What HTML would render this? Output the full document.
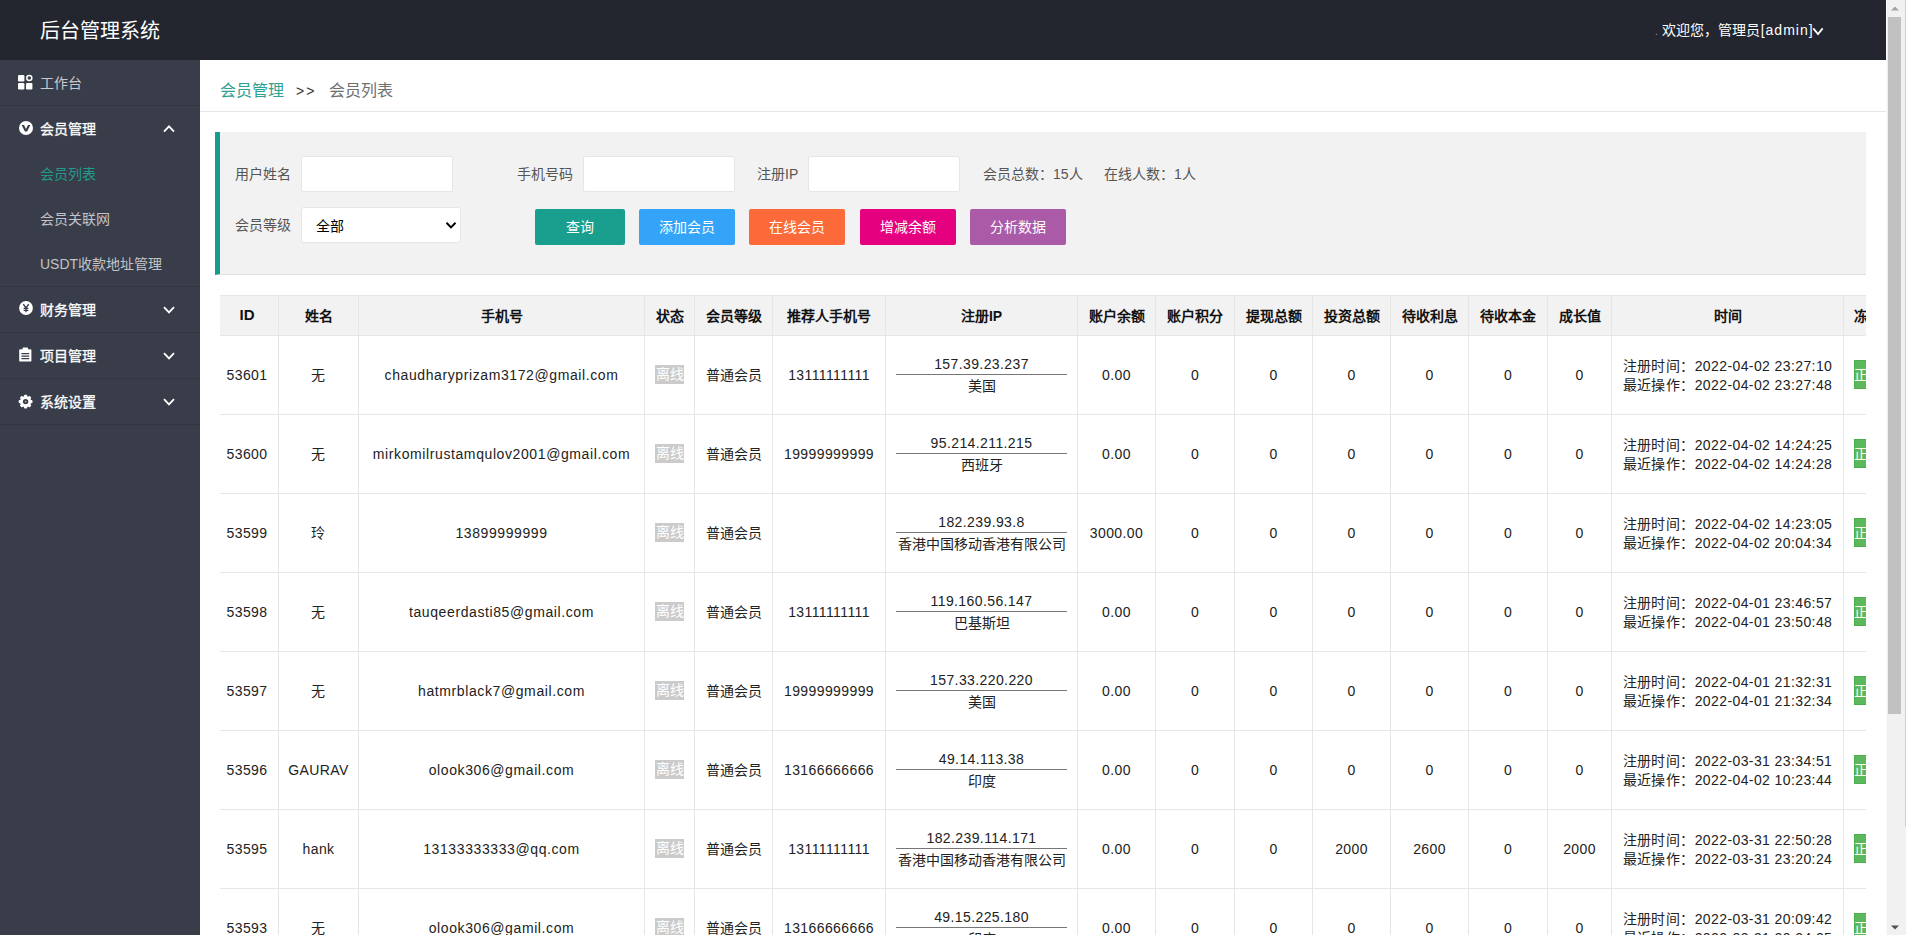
<!DOCTYPE html>
<html lang="zh-CN">
<head>
<meta charset="utf-8">
<title>后台管理系统</title>
<style>
*{box-sizing:border-box;margin:0;padding:0}
html,body{width:1906px;height:935px;overflow:hidden;background:#fff}
body{font-family:"Liberation Sans",sans-serif;font-size:14px;color:#222;position:relative}
.abs{position:absolute}
/* header */
#hd{left:0;top:0;width:1886px;height:60px;background:#23262e}
#logo{left:40px;top:1px;height:60px;line-height:60px;font-size:20px;color:#fff;white-space:nowrap}
#user{left:1655px;top:0;height:60px;line-height:60px;font-size:14px;color:#fff;white-space:nowrap}
/* sidebar */
#side{left:0;top:60px;width:200px;height:875px;background:#393d49}
.mi{position:absolute;left:0;width:200px;height:46px;border-bottom:1px solid #32353f;color:#fff;font-size:14px;line-height:45px;white-space:nowrap}
.mi .t{position:absolute;left:40px;top:1px;-webkit-text-stroke:.3px currentColor}
.mi svg.ic{position:absolute;left:17px;top:14px}
.mi svg.ch{position:absolute;left:162px;top:18px}
.sub{position:absolute;left:40px;height:45px;line-height:47px;font-size:14px;color:#c2c3c8;white-space:nowrap}
/* main */
#bc{left:200px;top:60px;width:1686px;height:52px;border-bottom:1px solid #e6e6e6;background:#fff}
#bc span{position:absolute;top:1px;height:60px;line-height:60px;font-size:16px;white-space:nowrap}
#panel{left:215px;top:132px;width:1651px;height:143px;background:#f2f2f2;border-left:5px solid #169c8c;border-bottom:1px solid #e2e2e2}
.lb{position:absolute;font-size:14px;color:#555;height:36px;line-height:36px;white-space:nowrap}
.inp{position:absolute;height:36px;background:#fff;border:1px solid #e6e6e6;border-radius:2px}
.btn{position:absolute;top:209px;height:36px;line-height:36px;border-radius:2px;color:#fff;font-size:14px;text-align:center;white-space:nowrap}
/* table */
#tw{left:220px;top:295px;width:1646px;height:640px;overflow:hidden}
#tw table{table-layout:fixed;width:1714px;border-collapse:separate;border-spacing:0}
#tw th{height:41px;background:#f2f2f2;border-top:1px solid #e6e6e6;border-bottom:1px solid #e6e6e6;border-right:1px solid #e6e6e6;font-weight:bold;font-size:14px;color:#111;text-align:center;white-space:nowrap;overflow:hidden;padding-bottom:2px}
#tw th:first-child,#tw td:first-child{padding-right:4px}
#tw th:first-child{font-size:15px}
#tw td:nth-child(3){letter-spacing:.6px}
#tw td{height:79px;border-bottom:1px solid #e6e6e6;border-right:1px solid #e6e6e6;font-size:14px;color:#222;text-align:center;vertical-align:middle;white-space:nowrap;overflow:hidden;line-height:19px;letter-spacing:.4px}
#tw td.last,#tw th:last-child{text-align:left;padding-left:10px}
.off{display:inline-block;width:29px;height:19px;line-height:19px;background:#cbcbcb;color:#fff;vertical-align:middle;overflow:hidden;position:relative;top:-1px;letter-spacing:0}
.ok{display:inline-block;height:29px;line-height:29px;text-indent:-1px;padding:0;background:#5cb85c;border:1px solid #4cae4c;color:#fdfde8;font-size:14px;vertical-align:middle;position:relative;top:-1px;letter-spacing:0}
.ip{line-height:20px}
.hr{width:171px;height:1px;background:#777;margin:0 auto}
.loc{line-height:22px;letter-spacing:0}
#tw td:nth-child(5){letter-spacing:0}
.tm{line-height:19px;display:inline-block;text-align:left;position:relative;top:1px}
/* scrollbar */
#sb{left:1886px;top:0;width:20px;height:935px;background:#f1f1f1;border-left:1px solid #fafafa}
</style>
</head>
<body>
<!-- HEADER -->
<div id="hd" class="abs">
  <div id="logo" class="abs">后台管理系统</div>
  <div id="user" class="abs"><span style="font-size:10px;color:#9a9ca3">.</span> 欢迎您，管理员<span style="letter-spacing:1px;margin-left:1px">[admin]</span><svg width="12" height="9" viewBox="0 0 12 9" style="margin-left:-1.4px;vertical-align:-1px"><path d="M1.3 1.4 L6 7 L10.7 1.4" fill="none" stroke="#fff" stroke-width="1.8"/></svg></div>
</div>

<!-- SIDEBAR -->
<div id="side" class="abs">
  <div class="mi" style="top:0;color:#c9cacf">
    <svg class="ic" width="16" height="16" viewBox="0 0 16 16"><rect x="1" y="1" width="6.4" height="6.4" rx="1.2" fill="#fff"/><rect x="1" y="9" width="6.4" height="6.4" rx="1.2" fill="#fff"/><rect x="9" y="9" width="6.4" height="6.4" rx="1.2" fill="#fff"/><circle cx="12.3" cy="4.1" r="2.5" fill="none" stroke="#fff" stroke-width="1.5"/></svg>
    <span class="t" style="-webkit-text-stroke:0">工作台</span>
  </div>
  <div class="mi" style="top:46px;border-bottom:none">
    <svg class="ic" width="16" height="16" viewBox="0 0 16 16" style="top:14px;left:18px"><circle cx="8" cy="8" r="7" fill="#fff"/><path d="M3.6 5 H6 L8 8.9 L10 5 H12.4 L9.1 11.4 H6.9 Z" fill="#393d49"/></svg>
    <span class="t">会员管理</span>
    <svg class="ch" width="14" height="10" viewBox="0 0 14 10"><path d="M2 7.6 L7 2.4 L12 7.6" fill="none" stroke="#fff" stroke-width="1.8"/></svg>
  </div>
  <div class="sub" style="top:91px;color:#1f9c89">会员列表</div>
  <div class="sub" style="top:136px">会员关联网</div>
  <div class="sub" style="top:181px">USDT收款地址管理</div>
  <div class="abs" style="left:0;top:226px;width:200px;height:1px;background:#32353f"></div>
  <div class="mi" style="top:227px">
    <svg class="ic" width="16" height="16" viewBox="0 0 16 16" style="left:18px;top:13px"><circle cx="8" cy="8" r="6.9" fill="#fff"/><path d="M5.3 4.2 L8 8 L10.7 4.2 M8 8 V12.2 M5.6 8.3 H10.4 M5.6 10.3 H10.4" fill="none" stroke="#393d49" stroke-width="1.35"/></svg>
    <span class="t">财务管理</span>
    <svg class="ch" width="14" height="10" viewBox="0 0 14 10"><path d="M2 2.2 L7 7.4 L12 2.2" fill="none" stroke="#fff" stroke-width="1.8"/></svg>
  </div>
  <div class="mi" style="top:273px">
    <svg class="ic" width="16" height="16" viewBox="0 0 16 16" style="left:18px;top:14px"><rect x="1.2" y="2.2" width="12.2" height="12.4" rx="1.2" fill="#fff"/><rect x="4.6" y="0.6" width="5.4" height="3.2" rx="0.8" fill="#fff"/><path d="M3.4 6.6 H11.2 M3.4 9.1 H11.2 M3.4 11.6 H11.2" stroke="#393d49" stroke-width="1.15"/></svg>
    <span class="t">项目管理</span>
    <svg class="ch" width="14" height="10" viewBox="0 0 14 10"><path d="M2 2.2 L7 7.4 L12 2.2" fill="none" stroke="#fff" stroke-width="1.8"/></svg>
  </div>
  <div class="mi" style="top:319px">
    <svg class="ic" width="16" height="16" viewBox="0 0 16 16" style="left:18px;top:15px"><g fill="#fff"><circle cx="7.6" cy="7.6" r="5.6"/><rect x="6" y="0.7" width="3.2" height="13.8" rx="1"/><rect x="6" y="0.7" width="3.2" height="13.8" rx="1" transform="rotate(45 7.6 7.6)"/><rect x="6" y="0.7" width="3.2" height="13.8" rx="1" transform="rotate(90 7.6 7.6)"/><rect x="6" y="0.7" width="3.2" height="13.8" rx="1" transform="rotate(135 7.6 7.6)"/></g><circle cx="7.6" cy="7.6" r="2.7" fill="#393d49"/><circle cx="7.6" cy="7.6" r="0.9" fill="#fff" opacity=".55"/></svg>
    <span class="t">系统设置</span>
    <svg class="ch" width="14" height="10" viewBox="0 0 14 10"><path d="M2 2.2 L7 7.4 L12 2.2" fill="none" stroke="#fff" stroke-width="1.8"/></svg>
  </div>
</div>

<!-- BREADCRUMB -->
<div id="bc" class="abs">
  <span style="left:20px;color:#2fa193">会员管理</span>
  <span style="left:96px;color:#333;font-size:14px;letter-spacing:2px">&gt;&gt;</span>
  <span style="left:129px;color:#6f6f6f">会员列表</span>
</div>

<!-- FILTER PANEL -->
<div id="panel" class="abs"></div>
<div class="lb" style="left:235px;top:156px">用户姓名</div>
<div class="inp" style="left:301px;top:156px;width:152px"></div>
<div class="lb" style="left:517px;top:156px">手机号码</div>
<div class="inp" style="left:583px;top:156px;width:152px"></div>
<div class="lb" style="left:757px;top:156px">注册IP</div>
<div class="inp" style="left:808px;top:156px;width:152px"></div>
<div class="lb" style="left:983px;top:156px">会员总数：15人</div>
<div class="lb" style="left:1104px;top:156px">在线人数：1人</div>
<div class="lb" style="left:235px;top:207px">会员等级</div>
<div class="inp" style="left:301px;top:207px;width:160px;border-radius:3px"><span class="abs" style="left:14px;top:1px;line-height:35px;color:#000">全部</span><svg class="abs" style="left:143px;top:13px" width="12" height="9" viewBox="0 0 12 9"><path d="M1.5 1.8 L6 6.4 L10.5 1.8" fill="none" stroke="#000" stroke-width="2"/></svg></div>
<div class="btn" style="left:535px;width:90px;background:#1a9e8e">查询</div>
<div class="btn" style="left:639px;width:96px;background:#33a4f8">添加会员</div>
<div class="btn" style="left:749px;width:96px;background:#fb6a38">在线会员</div>
<div class="btn" style="left:860px;width:96px;background:#e4007f">增减余额</div>
<div class="btn" style="left:970px;width:96px;background:#aa5aa6">分析数据</div>

<!-- TABLE -->
<div id="tw" class="abs"><table cellspacing="0" cellpadding="0"><colgroup><col style="width:59px"><col style="width:80px"><col style="width:286px"><col style="width:50px"><col style="width:78px"><col style="width:113px"><col style="width:192px"><col style="width:78px"><col style="width:79px"><col style="width:78px"><col style="width:78px"><col style="width:78px"><col style="width:79px"><col style="width:64px"><col style="width:232px"><col style="width:90px"></colgroup>
<thead><tr><th>ID</th><th>姓名</th><th>手机号</th><th>状态</th><th>会员等级</th><th>推荐人手机号</th><th>注册IP</th><th>账户余额</th><th>账户积分</th><th>提现总额</th><th>投资总额</th><th>待收利息</th><th>待收本金</th><th>成长值</th><th>时间</th><th>冻结状态</th></tr></thead><tbody>
<tr><td>53601</td><td>无</td><td>chaudharyprizam3172@gmail.com</td><td><span class="off">离线</span></td><td>普通会员</td><td>13111111111</td><td><div class="ip">157.39.23.237</div><div class="hr"></div><div class="loc">美国</div></td><td>0.00</td><td>0</td><td>0</td><td>0</td><td>0</td><td>0</td><td>0</td><td><div class="tm">注册时间：2022-04-02 23:27:10<br>最近操作：2022-04-02 23:27:48</div></td><td class="last"><span class="ok">正常</span></td></tr>
<tr><td>53600</td><td>无</td><td>mirkomilrustamqulov2001@gmail.com</td><td><span class="off">离线</span></td><td>普通会员</td><td>19999999999</td><td><div class="ip">95.214.211.215</div><div class="hr"></div><div class="loc">西班牙</div></td><td>0.00</td><td>0</td><td>0</td><td>0</td><td>0</td><td>0</td><td>0</td><td><div class="tm">注册时间：2022-04-02 14:24:25<br>最近操作：2022-04-02 14:24:28</div></td><td class="last"><span class="ok">正常</span></td></tr>
<tr><td>53599</td><td>玲</td><td>13899999999</td><td><span class="off">离线</span></td><td>普通会员</td><td></td><td><div class="ip">182.239.93.8</div><div class="hr"></div><div class="loc">香港中国移动香港有限公司</div></td><td>3000.00</td><td>0</td><td>0</td><td>0</td><td>0</td><td>0</td><td>0</td><td><div class="tm">注册时间：2022-04-02 14:23:05<br>最近操作：2022-04-02 20:04:34</div></td><td class="last"><span class="ok">正常</span></td></tr>
<tr><td>53598</td><td>无</td><td>tauqeerdasti85@gmail.com</td><td><span class="off">离线</span></td><td>普通会员</td><td>13111111111</td><td><div class="ip">119.160.56.147</div><div class="hr"></div><div class="loc">巴基斯坦</div></td><td>0.00</td><td>0</td><td>0</td><td>0</td><td>0</td><td>0</td><td>0</td><td><div class="tm">注册时间：2022-04-01 23:46:57<br>最近操作：2022-04-01 23:50:48</div></td><td class="last"><span class="ok">正常</span></td></tr>
<tr><td>53597</td><td>无</td><td>hatmrblack7@gmail.com</td><td><span class="off">离线</span></td><td>普通会员</td><td>19999999999</td><td><div class="ip">157.33.220.220</div><div class="hr"></div><div class="loc">美国</div></td><td>0.00</td><td>0</td><td>0</td><td>0</td><td>0</td><td>0</td><td>0</td><td><div class="tm">注册时间：2022-04-01 21:32:31<br>最近操作：2022-04-01 21:32:34</div></td><td class="last"><span class="ok">正常</span></td></tr>
<tr><td>53596</td><td>GAURAV</td><td>olook306@gmail.com</td><td><span class="off">离线</span></td><td>普通会员</td><td>13166666666</td><td><div class="ip">49.14.113.38</div><div class="hr"></div><div class="loc">印度</div></td><td>0.00</td><td>0</td><td>0</td><td>0</td><td>0</td><td>0</td><td>0</td><td><div class="tm">注册时间：2022-03-31 23:34:51<br>最近操作：2022-04-02 10:23:44</div></td><td class="last"><span class="ok">正常</span></td></tr>
<tr><td>53595</td><td>hank</td><td>13133333333@qq.com</td><td><span class="off">离线</span></td><td>普通会员</td><td>13111111111</td><td><div class="ip">182.239.114.171</div><div class="hr"></div><div class="loc">香港中国移动香港有限公司</div></td><td>0.00</td><td>0</td><td>0</td><td>2000</td><td>2600</td><td>0</td><td>2000</td><td><div class="tm">注册时间：2022-03-31 22:50:28<br>最近操作：2022-03-31 23:20:24</div></td><td class="last"><span class="ok">正常</span></td></tr>
<tr><td>53593</td><td>无</td><td>olook306@gamil.com</td><td><span class="off">离线</span></td><td>普通会员</td><td>13166666666</td><td><div class="ip">49.15.225.180</div><div class="hr"></div><div class="loc">印度</div></td><td>0.00</td><td>0</td><td>0</td><td>0</td><td>0</td><td>0</td><td>0</td><td><div class="tm">注册时间：2022-03-31 20:09:42<br>最近操作：2022-03-31 20:34:25</div></td><td class="last"><span class="ok">正常</span></td></tr>
</tbody></table></div>

<!-- SCROLLBAR -->
<div id="sb" class="abs">
  <div class="abs" style="left:1px;top:17px;width:13px;height:697px;background:#c1c1c1"></div>
  <svg class="abs" style="left:4px;top:6px" width="8" height="5" viewBox="0 0 8 5"><path d="M0 4.6 L4 0.4 L8 4.6 Z" fill="#a3a3a3"/></svg>
  <svg class="abs" style="left:4px;top:925px" width="8" height="5" viewBox="0 0 8 5"><path d="M0 0.4 L4 4.6 L8 0.4 Z" fill="#505050"/></svg>
  <div class="abs" style="left:18px;top:0;width:1px;height:827px;background:#cfcfcf"></div>
</div>
</body>
</html>
